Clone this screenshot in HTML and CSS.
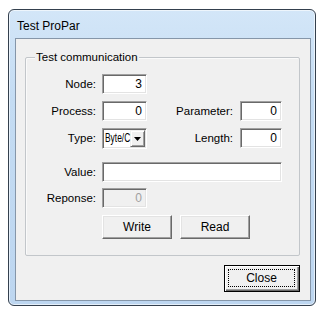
FILE: index.html
```html
<!DOCTYPE html>
<html>
<head>
<meta charset="utf-8">
<link rel="stylesheet" href="styles.css">
</head>
<body>
<div class="window">
  <div class="titlebar">Test ProPar</div>
  <div class="client">
    <div class="group">
      <span class="legend">Test communication</span>
      <div class="form">
        <span class="lbl c1">Node:</span>
        <div class="edit">3</div>

        <span class="lbl c1">Process:</span>
        <div class="edit">0</div>
        <span class="lbl c3">Parameter:</span>
        <div class="edit">0</div>

        <span class="lbl c1 tall">Type:</span>
        <div class="combo"><span class="combo-text"><span class="combo-value">Byte/C</span></span><span class="combo-btn"><svg width="7" height="4" viewBox="0 0 7 4"><path d="M0 0h7L3.5 4z" fill="#000"/></svg></span></div>
        <span class="lbl c3">Length:</span>
        <div class="edit">0</div>

        <span class="lbl c1">Value:</span>
        <div class="edit wide"></div>

        <span class="lbl c1">Reponse:</span>
        <div class="edit disabled">0</div>

        <div class="buttons">
          <div class="btn">Write</div>
          <div class="btn">Read</div>
        </div>
      </div>
    </div>
    <div class="footer">
      <div class="btn default"><span class="focus">Close</span></div>
    </div>
  </div>
</div>
</body>
</html>
```

FILE: styles.css
```css
html, body {
  margin: 0;
  padding: 0;
  background: #ffffff;
}

body {
  font-family: "Liberation Sans", Arial, sans-serif;
  font-size: 11.5px;
  color: #000;
}

.window {
  box-sizing: border-box;
  margin: 9px 0 0 8px;
  width: 308px;
  height: 297px;
  border: 1px solid #34404e;
  border-radius: 6px;
  background: linear-gradient(180deg, #d3e6f8 0%, #c4dcf3 30%, #bdd6f0 100%);
  box-shadow: inset 0 0 0 1px rgba(255, 255, 255, 0.6);
  padding: 0 4px 4px 6px;
  display: flex;
  flex-direction: column;
}

.titlebar {
  height: 28px;
  box-sizing: border-box;
  padding: 9px 0 0 2px;
  font-size: 12px;
  line-height: 15px;
  color: #000;
}

.client {
  flex: 1;
  border: 1px solid #8596a9;
  background: #f0f0f0;
  padding: 18px 10px 0 9px;
  display: flex;
  flex-direction: column;
}

.group {
  position: relative;
  border: 1px solid #c2c6ca;
  border-radius: 2px;
  box-shadow: inset 1px 1px 0 #fafafa;
  padding: 16px 0 16px 0;
}

.legend {
  position: absolute;
  top: -8px;
  left: 9px;
  padding: 0 1px;
  background: #f0f0f0;
  font-size: 11.5px;
  line-height: 14px;
}

.form {
  display: grid;
  grid-template-columns: 76px 45px 93px 42px;
  grid-template-rows: 27px 27px 34px 26px 27px 24px;
  align-items: start;
}

.lbl {
  height: 20px;
  line-height: 20px;
  text-align: right;
  white-space: nowrap;
}

.lbl.c1 {
  grid-column: 1;
  padding-right: 6px;
}

.lbl.c3 {
  grid-column: 3;
  padding-right: 7px;
}

.lbl.tall {
  height: 21px;
  line-height: 21px;
}

.edit {
  box-sizing: border-box;
  height: 20px;
  background: #fff;
  border: 1px solid;
  border-color: #a0a0a0 #ffffff #ffffff #a0a0a0;
  box-shadow: inset 1px 1px 0 #696969, inset -1px -1px 0 #e3e3e3;
  text-align: right;
  padding: 0 4px 0 0;
  font-size: 12px;
  line-height: 18px;
}

.edit.wide {
  grid-column: 2 / 5;
}

.edit.disabled {
  background: #f0f0f0;
  color: #a0a0a0;
}

.combo {
  box-sizing: border-box;
  height: 21px;
  background: #fff;
  border: 1px solid;
  border-color: #a0a0a0 #ffffff #ffffff #a0a0a0;
  box-shadow: inset 1px 1px 0 #696969, inset -1px -1px 0 #e3e3e3;
  display: flex;
  padding: 1px;
}

.combo-text {
  flex: 1;
  min-width: 0;
  padding-left: 1px;
}

.combo-value {
  display: inline-block;
  font-size: 12px;
  line-height: 17px;
  white-space: nowrap;
  transform: scaleX(0.7);
  transform-origin: 0 50%;
}

.combo-btn {
  box-sizing: border-box;
  flex: none;
  width: 15px;
  height: 17px;
  background: #f0f0f0;
  border: 1px solid;
  border-color: #f0f0f0 #696969 #696969 #f0f0f0;
  box-shadow: inset 1px 1px 0 #fff, inset -1px -1px 0 #a0a0a0;
  display: flex;
  align-items: center;
  justify-content: center;
}

.buttons {
  grid-column: 2 / 5;
  display: flex;
  gap: 8px;
}

.btn {
  box-sizing: border-box;
  width: 70px;
  height: 24px;
  background: #f0f0f0;
  border: 1px solid;
  border-color: #ffffff #696969 #696969 #ffffff;
  box-shadow: inset -1px -1px 0 #a0a0a0, inset 1px 1px 0 #e3e3e3;
  font-size: 12px;
  line-height: 22px;
  text-align: center;
}

.footer {
  display: flex;
  justify-content: flex-end;
  margin-top: 9px;
}

.btn.default {
  width: 76px;
  height: 27px;
  border: 1px solid #000;
  box-shadow: inset 1px 1px 0 #fff, inset -1px -1px 0 #696969, inset -2px -2px 0 #a0a0a0;
  padding: 3px 4px 4px 3px;
  display: flex;
}

.focus {
  flex: 1;
  border: 1px dotted #000;
  line-height: 17px;
  text-align: center;
}
```
